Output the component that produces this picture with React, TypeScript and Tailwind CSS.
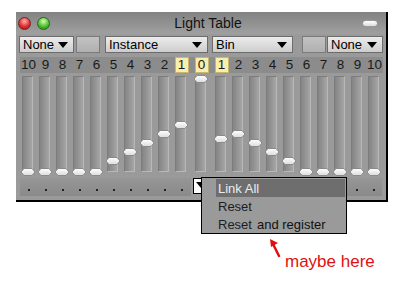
import React from 'react';

type Col = { label: number; knob: number; hot?: boolean; wide?: boolean };

// knob top offsets (px) inside the slider area
const leftCols: Col[] = [
  { label: 10, knob: 91 },
  { label: 9, knob: 91 },
  { label: 8, knob: 91 },
  { label: 7, knob: 91 },
  { label: 6, knob: 91 },
  { label: 5, knob: 80 },
  { label: 4, knob: 71 },
  { label: 3, knob: 62 },
  { label: 2, knob: 53 },
  { label: 1, knob: 44, hot: true },
];
const centerCol: Col = { label: 0, knob: -2, hot: true, wide: true };
const rightCols: Col[] = [
  { label: 1, knob: 58, hot: true },
  { label: 2, knob: 53 },
  { label: 3, knob: 62 },
  { label: 4, knob: 71 },
  { label: 5, knob: 80 },
  { label: 6, knob: 91 },
  { label: 7, knob: 91 },
  { label: 8, knob: 91 },
  { label: 9, knob: 91 },
  { label: 10, knob: 91 },
];
const cols = [...leftCols, centerCol, ...rightCols];

function Triangle() {
  return (
    <svg width="10" height="6" viewBox="0 0 10 6" className="shrink-0">
      <polygon points="0,0 10,0 5,6" fill="#000" />
    </svg>
  );
}

function Dropdown({ label, className }: { label: string; className: string }) {
  return (
    <div
      className={
        'flex h-[17px] items-center justify-between border border-[#6c6c6c] bg-gradient-to-b from-[#ececec] to-[#cdcdcd] pl-[3px] pr-[5px] text-[13px] leading-none text-black ' +
        className
      }
    >
      <span>{label}</span>
      <Triangle />
    </div>
  );
}

function Blank({ className }: { className: string }) {
  return (
    <div
      className={
        'h-[17px] w-[24px] border border-[#7a7a7a] bg-gradient-to-b from-[#c2c2c2] to-[#b0b0b0] ' + className
      }
    />
  );
}

function Knob() {
  return (
    <svg width="15" height="8" viewBox="0 0 15 8">
      <defs>
        <linearGradient id="kg" x1="0" y1="0" x2="0" y2="1">
          <stop offset="0" stopColor="#ffffff" />
          <stop offset="1" stopColor="#dcdcdc" />
        </linearGradient>
      </defs>
      <polygon points="3.5,0.5 11.5,0.5 14.5,4 11.5,7.5 3.5,7.5 0.5,4" fill="url(#kg)" stroke="#8a8a8a" strokeWidth="1" />
    </svg>
  );
}

function Slider({ col }: { col: Col }) {
  return (
    <div className={(col.wide ? 'w-[23px]' : 'w-[17px]') + ' relative flex h-[100px] justify-center'}>
      <div className="h-[96px] w-[11px] border border-[#b8b8b8] border-l-[#7c7c7c] border-t-[#7c7c7c] bg-gradient-to-r from-[#848484] to-[#a6a6a6]" />
      <div className="absolute left-1/2 flex -translate-x-1/2" style={{ top: col.knob + 1 }}>
        <Knob />
      </div>
    </div>
  );
}

export default function App() {
  return (
    <div className="relative h-[281px] w-[404px] overflow-hidden bg-white" style={{ fontFamily: '"Liberation Sans", Arial, sans-serif' }}>
      {/* window */}
      <div className="ml-[16px] mt-[12px] flex h-[190px] w-[372px] flex-col border-b-2 border-r-2 border-black bg-[#9a9a9a]">
        {/* title bar */}
        <div className="relative flex h-[22px] items-center bg-gradient-to-b from-[#828282] to-[#a0a0a0] px-[2px]">
          <div className="h-[13px] w-[13px] rounded-full border border-[#7a2020] bg-[radial-gradient(circle_at_50%_30%,#ffb0b0,#e03030_55%,#a01010)]" />
          <div className="ml-[6px] h-[13px] w-[13px] rounded-full border border-[#2a6a1a] bg-[radial-gradient(circle_at_50%_30%,#d8ffb0,#50c030_55%,#2a7a10)]" />
          <div className="flex-1 pl-[4px] text-center text-[14px] leading-none text-[#111]">Light Table</div>
          <div className="mr-[6px] h-[7px] w-[16px] rounded-full border border-[#999] bg-gradient-to-b from-white to-[#dcdcdc]" />
        </div>

        {/* dropdown row */}
        <div className="mt-[2px] flex pl-[3px]">
          <Dropdown label="None" className="w-[55px]" />
          <Blank className="ml-[2px]" />
          <Dropdown label="Instance" className="ml-[5px] w-[103px]" />
          <Dropdown label="Bin" className="ml-[4px] w-[81px]" />
          <Blank className="ml-[9px]" />
          <Dropdown label="None" className="ml-[1px] w-[56px]" />
        </div>

        {/* numbers */}
        <div className="ml-[4px] mt-[4px] flex h-[16px] w-[363px] bg-[#8c8c8c]">
          {cols.map((c, i) => (
            <div key={i} className={(c.wide ? 'w-[23px]' : 'w-[17px]') + ' flex justify-center'}>
              <div
                className={
                  'flex h-[16px] items-center justify-center text-[13.5px] leading-none text-[#1a1a1a] ' +
                  (c.hot ? 'w-[14px] border border-[#c9b66a] bg-[#f8eeae]' : 'w-[17px]')
                }
              >
                {c.label}
              </div>
            </div>
          ))}
        </div>

        {/* sliders */}
        <div className="mt-[3px] flex pl-[3px]">
          {cols.map((c, i) => (
            <Slider key={i} col={c} />
          ))}
        </div>

        {/* bottom row */}
        <div className="mt-[2px] flex h-[18px] pl-[4px]">
          <div className="flex w-[171px] bg-gradient-to-b from-[#969696] to-[#8a8a8a]">
            {leftCols.map((c, i) => (
              <div key={i} className="flex w-[17px] items-end justify-center pb-[5px]">
                <div className="h-[2px] w-[2px] bg-[#222]" />
              </div>
            ))}
          </div>
          <div className="ml-[2px] flex h-[16px] w-[15px] items-start justify-center border border-black bg-white pt-[3px]">
            <Triangle />
          </div>
          <div className="ml-[4px] flex w-[170px] bg-gradient-to-b from-[#969696] to-[#8a8a8a]">
            {rightCols.map((c, i) => (
              <div key={i} className="flex w-[17px] items-end justify-center pb-[5px]">
                <div className="h-[2px] w-[2px] bg-[#222]" />
              </div>
            ))}
          </div>
        </div>
      </div>

      {/* popup menu */}
      <div className="absolute left-[201px] top-[177px] flex h-[57px] w-[146px] flex-col border border-black bg-[#9a9a9a] pt-[1px] text-[13px] leading-none">
        <div className="ml-[14px] mr-[1px] flex h-[18px] items-center bg-[#6e6e6e] pl-[2px] text-[#ececec]">Link All</div>
        <div className="flex h-[18px] items-center pl-[16px] text-[#1e1e1e]">Reset</div>
        <div className="flex h-[18px] items-center pl-[16px] text-[#1e1e1e]">
          <span>Reset</span>
          <span className="ml-[5px] text-[#111]">and register</span>
        </div>
      </div>

      {/* annotation */}
      <svg className="absolute left-[266px] top-[236px]" width="20" height="24" viewBox="0 0 20 24">
        <path d="M13 20 L7 8" stroke="#e01010" strokeWidth="2.5" strokeLinecap="round" fill="none" />
        <polygon points="4,3 12,7 5,11" fill="#e01010" />
      </svg>
      <div className="absolute left-[285px] top-[253px] text-[17px] leading-none text-[#e01010]">maybe here</div>
    </div>
  );
}
